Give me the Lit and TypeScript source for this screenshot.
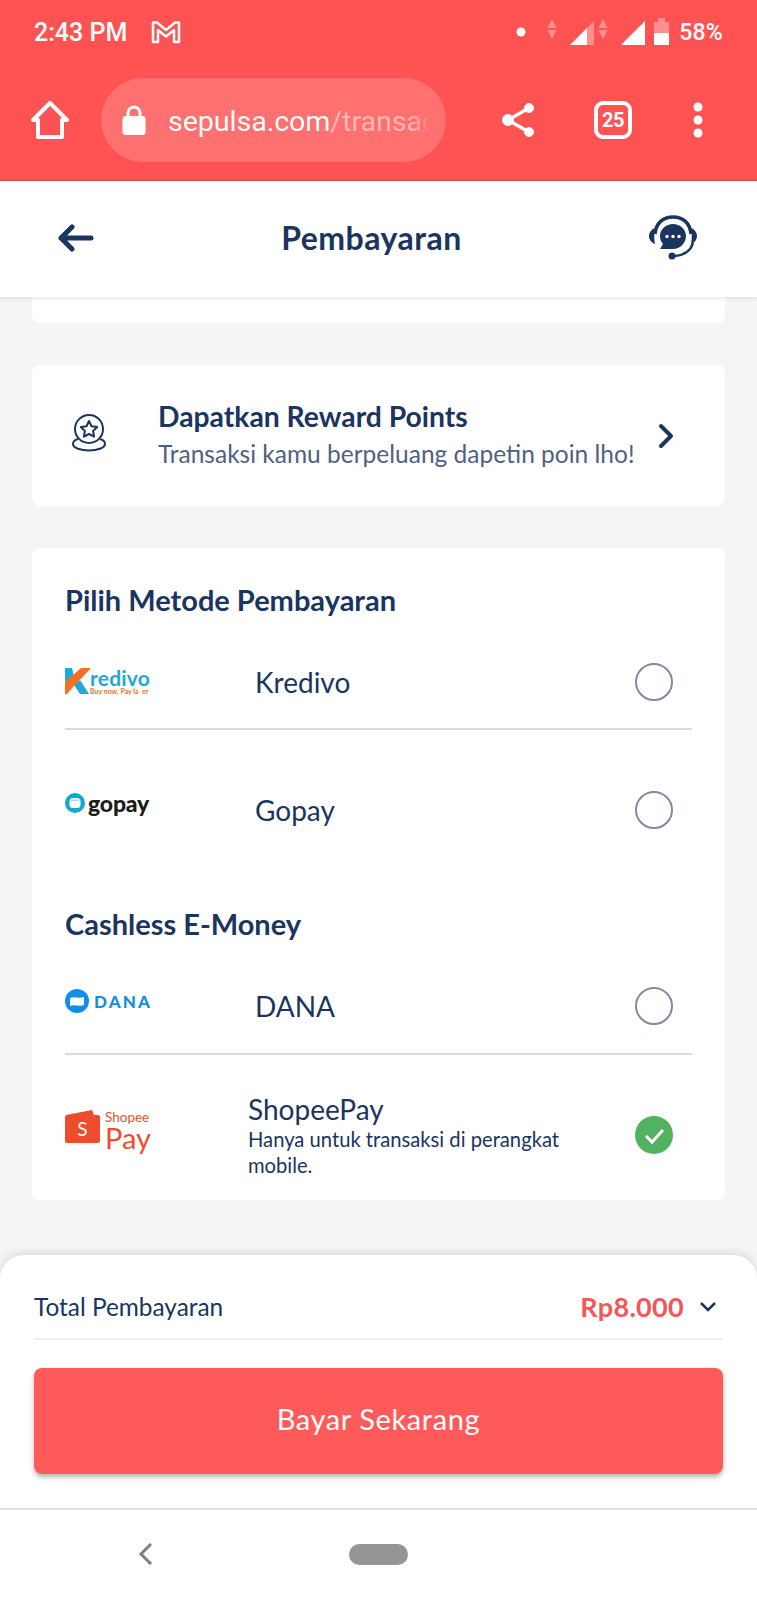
import {LitElement, css, html} from 'lit';
import {customElement} from 'lit/decorators.js';

const NAVY = '#1a3560';

@customElement('app-root')
export class AppRoot extends LitElement {
  static styles = css`
    :host {
      display: flex;
      flex-direction: column;
      width: 757px;
      height: 1600px;
      overflow: hidden;
      background: #f4f5f7;
      font-family: "Lato", "Noto Sans", sans-serif;
      color: #1a3560;
    }
    svg { display: block; flex: none; }

    .chrome {
      height: 181px;
      flex: none;
      box-sizing: border-box;
      background: #ff5252;
      color: #fff;
      padding-top: 17px;
      border-bottom: 1px solid #d85050;
    }
    .status {
      display: flex;
      align-items: center;
      height: 30px;
      padding: 0 34px;
      font-family: Roboto, sans-serif;
      font-size: 25px;
      font-weight: 500;
    }
    .time { width: 117px; }
    .status-right { margin-left: auto; display: flex; align-items: center; gap: 9px; }
    .pct { font-size: 23px; letter-spacing: .2px; }
    .toolbar {
      display: flex;
      align-items: center;
      height: 84px;
      margin-top: 31px;
      padding-left: 31px;
    }
    .url {
      width: 345px;
      height: 84px;
      margin-left: 32px;
      box-sizing: border-box;
      border-radius: 42px;
      background: #ff7070;
      display: flex;
      align-items: center;
      padding-left: 21px;
      font-family: Roboto, sans-serif;
      font-size: 28.5px;
    }
    .url-text {
      margin-left: 22px;
      padding-top: 2px;
      width: 264px;
      overflow: hidden;
      white-space: nowrap;
      -webkit-mask-image: linear-gradient(90deg, #000 92%, transparent);
      mask-image: linear-gradient(90deg, #000 92%, transparent);
    }
    .url-text span { opacity: .5; }
    .share { margin-left: 56px; }
    .tabs {
      margin-left: 59px;
      width: 38px;
      height: 38px;
      box-sizing: border-box;
      border: 4px solid #fff;
      border-radius: 9px;
      font-family: Roboto, sans-serif;
      font-size: 20px;
      font-weight: 700;
      letter-spacing: -.5px;
      display: flex;
      align-items: center;
      justify-content: center;
    }
    .more { margin-left: 61px; }

    .nav {
      height: 116px;
      flex: none;
      box-sizing: border-box;
      background: #fff;
      display: flex;
      align-items: center;
      justify-content: space-between;
      padding: 0 60px 3px 58px;
      box-shadow: 0 1px 4px rgba(0, 0, 0, .12);
      position: relative;
    }
    .nav h1 {
      margin: 0;
      font-size: 32px;
      font-weight: 700;
      letter-spacing: .5px;
    }

    .main {
      flex: 1;
      display: flex;
      flex-direction: column;
      gap: 42px;
      padding: 0 32px;
    }
    .card { background: #fff; border-radius: 8px; }
    .stub { height: 26px; border-radius: 0 0 8px 8px; }
    .reward {
      height: 141px;
      box-sizing: border-box;
      display: flex;
      align-items: center;
      padding-left: 40px;
      padding-right: 51px;
    }
    .reward-icon { margin-top: -6px; }
    .reward-text { margin-left: 52px; flex: 1; padding-top: 1px; }
    .reward-title { font-size: 28.3px; font-weight: 700; line-height: 36px; }
    .reward-sub {
      font-size: 24.5px;
      line-height: 40px;
      color: #4f6180;
      white-space: nowrap;
    }

    .methods {
      height: 652px;
      box-sizing: border-box;
      padding: 33px 33px 0;
      display: flex;
      flex-direction: column;
    }
    h2 {
      margin: 0;
      font-size: 29px;
      font-weight: 700;
      line-height: 38px;
    }
    .row {
      display: flex;
      align-items: center;
      position: relative;
    }
    .row-kredivo { height: 110px; padding-top: 17px; box-sizing: border-box; }
    .row-gopay { height: 160px; }
    .row-dana { height: 110px; padding-top: 16px; box-sizing: border-box; }
    .row-shopee { height: 146px; padding-top: 16px; box-sizing: border-box; }
    .section-two { margin-top: 16px; }
    .logo { width: 190px; flex: none; }
    .logo-kredivo { margin-bottom: 2px; }
    .logo-gopay { margin-bottom: 14px; }
    .logo-dana { margin-bottom: 10px; }
    .logo-shopee { margin-top: -10px; }
    .label { font-size: 28px; }
    .radio {
      margin-left: auto;
      margin-right: 19px;
      width: 38px;
      height: 38px;
      box-sizing: border-box;
      border: 2px solid #7f8ba0;
      border-radius: 50%;
      flex: none;
    }
    .check { margin-left: auto; margin-right: 19px; }
    .sep { height: 2px; background: #d9dcdf; flex: none; }
    .shopee-text { margin-left: -7px; width: 330px; }
    .shopee-sub { font-size: 20.2px; line-height: 26.5px; margin-top: 0; }

    .sheet {
      height: 253px;
      flex: none;
      box-sizing: border-box;
      background: #fff;
      border-radius: 24px 24px 0 0;
      box-shadow: 0 -3px 8px rgba(0, 0, 0, .1);
      padding: 0 34px;
      position: relative;
    }
    .total {
      height: 85px;
      box-sizing: border-box;
      padding-top: 20px;
      display: flex;
      align-items: center;
      border-bottom: 2px solid #eceef0;
      font-size: 24.4px;
    }
    .amount {
      margin-left: auto;
      color: #f25858;
      font-size: 27px;
      font-weight: 700;
      letter-spacing: .3px;
    }
    .caret { margin-left: 16px; margin-right: 7px; }
    .pay {
      margin-top: 28px;
      height: 106px;
      box-sizing: border-box;
      padding-bottom: 5px;
      border-radius: 8px;
      background: #ff5a5a;
      color: #fff;
      font-size: 29px;
      letter-spacing: .6px;
      display: flex;
      align-items: center;
      justify-content: center;
      box-shadow: 0 3px 5px rgba(0, 0, 0, .3);
    }

    .sysnav {
      height: 92px;
      flex: none;
      box-sizing: border-box;
      background: #fff;
      border-top: 2px solid #e2e3e5;
      display: flex;
      align-items: center;
      padding: 0 0 2px 138px;
      position: relative;
    }
    .pill {
      margin-left: 195px;
      width: 59px;
      height: 21px;
      border-radius: 11px;
      background: #959595;
    }

    .kredivo, .gopay, .dana, .spay { display: flex; }
    .kredivo { align-items: flex-start; }
    .kredivo-words { margin-left: -1px; width: 60px; }
    .kredivo-name {
      color: #1fa8d8;
      font-size: 21px;
      font-weight: 700;
      line-height: 21px;
      letter-spacing: .2px;
    }
    .kredivo-tag {
      color: #f37021;
      font-size: 7px;
      font-weight: 700;
      line-height: 7px;
      white-space: pre;
    }
    .gopay { align-items: center; gap: 3px; }
    .gopay-name { font-size: 23px; font-weight: 900; color: #1c1c1c; line-height: 24px; letter-spacing: -.2px; }
    .dana { align-items: center; gap: 5px; }
    .dana-name { font-size: 17px; font-weight: 900; color: #118ee9; letter-spacing: 2.1px; }
    .spay { align-items: flex-start; gap: 5px; color: #ee4d2d; }
    .spay-words { display: flex; flex-direction: column; align-items: flex-start; }
    .spay-top { font-size: 13.5px; line-height: 15px; }
    .spay-big { font-size: 29px; line-height: 26px; }
  `;

  renderStatusIcons() {
    return html`
      <svg width="155" height="30" viewBox="0 0 155 30">
        <circle cx="6" cy="15" r="4.5" fill="#fff"/>
        <g fill="#fff" opacity=".35">
          <path d="M37 2l4.500 9h-9zM37 22l4.500-9h-9z"/>
          <path d="M88 2l4.500 9h-9zM88 22l4.500-9h-9z"/>
        </g>
        <path d="M55 28L72 11v17z" fill="#fff"/>
        <path d="M72 11l7-7v24h-7z" fill="#fff" opacity=".35"/>
        <path d="M106 28l24-24v24z" fill="#fff"/>
        <path d="M139 5h4V1h7v4h4v11h-15z" fill="#fff" opacity=".35"/>
        <path d="M139 16h15v12h-15z" fill="#fff"/>
      </svg>
    `;
  }

  renderHeadset() {
    return html`
      <svg width="48" height="46" viewBox="0 0 48 46" fill=${NAVY}>
        <path d="M6 19C7 8 14 2 24 2s17 6 18 17" fill="none" stroke=${NAVY} stroke-width="3.500"/>
        <path d="M6 13c-3 1-6 4-6 8s3 7 6 8c-1-4-1-12 0-16zM42 13c3 1 6 4 6 8s-3 7-6 8c1-4 1-12 0-16z"/>
        <path d="M24 9c7 0 13 5 13 12s-6 13-13 13H11l3-5c-2-2-3-5-3-8 0-7 6-12 13-12z"/>
        <circle cx="18" cy="21.500" r="1.700" fill="#fff"/>
        <circle cx="24" cy="21.500" r="1.700" fill="#fff"/>
        <circle cx="30" cy="21.500" r="1.700" fill="#fff"/>
        <path d="M44 28c-2 7-8 12-18 13" fill="none" stroke=${NAVY} stroke-width="2.500"/>
        <circle cx="23" cy="41" r="3.500"/>
      </svg>
    `;
  }

  renderKredivo() {
    return html`
      <div class="kredivo">
        <svg width="26" height="27" viewBox="0 0 26 27">
          <path d="M0 1h7l2 9-3 6-6-2z" fill="#1fa8d8"/>
          <path d="M9 18l6-5 9 14h-9z" fill="#1fa8d8"/>
          <path d="M16 1h10L9 19 2 27H0V15z" fill="#f37021"/>
        </svg>
        <div class="kredivo-words">
          <div class="kredivo-name">redivo</div>
          <div class="kredivo-tag">Buy now, Pay la  er</div>
        </div>
      </div>
    `;
  }

  renderGopay() {
    return html`
      <div class="gopay">
        <svg width="20" height="20" viewBox="0 0 20 20">
          <circle cx="10" cy="10" r="10" fill="#12a9d0"/>
          <rect x="4.500" y="5" width="11" height="10" rx="3.500" fill="#fff"/>
          <rect x="6" y="6.500" width="8" height="1.500" rx=".7" fill="#9fdcec"/>
        </svg>
        <span class="gopay-name">gopay</span>
      </div>
    `;
  }

  renderDana() {
    return html`
      <div class="dana">
        <svg width="24" height="24" viewBox="0 0 24 24">
          <circle cx="12" cy="12" r="12" fill="#118ee9"/>
          <path d="M5 9c4-2 9 1 14-1v8c-5 2-9-1-14 1z" fill="#fff"/>
        </svg>
        <span class="dana-name">DANA</span>
      </div>
    `;
  }

  renderSpay() {
    return html`
      <div class="spay">
        <svg width="35" height="33" viewBox="0 0 35 33">
          <path d="M1 5L27 0l2 5z" fill="#ee4d2d"/>
          <rect x="0" y="5" width="35" height="28" rx="2" fill="#ee4d2d"/>
          <text x="17.500" y="26" text-anchor="middle" font-family="Lato, sans-serif" font-size="19" fill="#fff">S</text>
        </svg>
        <div class="spay-words">
          <span class="spay-top">Shopee</span>
          <span class="spay-big">Pay</span>
        </div>
      </div>
    `;
  }

  render() {
    return html`
      <div class="chrome">
        <div class="status">
          <span class="time">2:43 PM</span>
          <svg width="30" height="24" viewBox="0 0 30 24" fill="none" stroke="#fff" stroke-width="2.500" stroke-linejoin="round">
            <path d="M2 2.500h4L15 10l9-7.500h4V22h-5V10l-8 6.500L7 10v12H2z"/>
          </svg>
          <div class="status-right">
            ${this.renderStatusIcons()}
            <span class="pct">58%</span>
          </div>
        </div>
        <div class="toolbar">
          <svg width="38" height="38" viewBox="0 0 38 38" fill="none" stroke="#fff" stroke-width="4" stroke-linejoin="round" stroke-linecap="round">
            <path d="M2 19L19 2l17 17h-5v17H7V19z"/>
          </svg>
          <div class="url">
            <svg width="24" height="30" viewBox="0 0 24 30">
              <path d="M6 13V8a6 6 0 0 1 12 0v5" fill="none" stroke="#fff" stroke-width="3"/>
              <rect x="0.500" y="11" width="23" height="19" rx="3" fill="#fff"/>
            </svg>
            <div class="url-text">sepulsa.com<span>/transaction</span></div>
          </div>
          <svg class="share" width="33" height="36" viewBox="0 0 33 36" fill="#fff" stroke="#fff">
            <path d="M6 18L27 6M6 18l21 12" stroke-width="3.500"/>
            <circle cx="6" cy="18" r="5.500"/>
            <circle cx="27" cy="6" r="4.500"/>
            <circle cx="27" cy="30" r="4.500"/>
          </svg>
          <div class="tabs">25</div>
          <svg class="more" width="10" height="36" viewBox="0 0 10 36" fill="#fff">
            <circle cx="5" cy="5" r="4.500"/>
            <circle cx="5" cy="18" r="4.500"/>
            <circle cx="5" cy="31" r="4.500"/>
          </svg>
        </div>
      </div>

      <div class="nav">
        <svg width="36" height="30" viewBox="0 0 36 30" fill="none" stroke=${NAVY} stroke-width="5" stroke-linecap="round" stroke-linejoin="round">
          <path d="M33 15H3M14 4L3 15l11 11"/>
        </svg>
        <h1>Pembayaran</h1>
        ${this.renderHeadset()}
      </div>

      <div class="main">
        <div class="card stub"></div>
        <div class="card reward">
          <svg class="reward-icon" width="34" height="38" viewBox="0 0 34 38" fill="none" stroke=${NAVY} stroke-width="2" stroke-linejoin="round">
            <circle cx="17" cy="15" r="14"/>
            <path d="M17 7l2.500 5.200 5.700.8-4.100 4 1 5.700-5.100-2.700-5.100 2.700 1-5.700-4.100-4 5.700-.8z"/>
            <path d="M6 25C2 26 1 28 1 30c0 4 8 6.500 16 6.500S33 34 33 30c0-2-1-4-5-5"/>
          </svg>
          <div class="reward-text">
            <div class="reward-title">Dapatkan Reward Points</div>
            <div class="reward-sub">Transaksi kamu berpeluang dapetin poin lho!</div>
          </div>
          <svg width="16" height="26" viewBox="0 0 16 26" fill="none" stroke=${NAVY} stroke-width="4" stroke-linecap="round" stroke-linejoin="round">
            <path d="M3 3l10 10L3 23"/>
          </svg>
        </div>
        <div class="card methods">
          <h2>Pilih Metode Pembayaran</h2>
          <div class="row row-kredivo">
            <div class="logo logo-kredivo">${this.renderKredivo()}</div>
            <span class="label">Kredivo</span>
            <span class="radio"></span>
          </div>
          <div class="sep"></div>
          <div class="row row-gopay">
            <div class="logo logo-gopay">${this.renderGopay()}</div>
            <span class="label">Gopay</span>
            <span class="radio"></span>
          </div>
          <h2 class="section-two">Cashless E-Money</h2>
          <div class="row row-dana">
            <div class="logo logo-dana">${this.renderDana()}</div>
            <span class="label">DANA</span>
            <span class="radio"></span>
          </div>
          <div class="sep"></div>
          <div class="row row-shopee">
            <div class="logo logo-shopee">${this.renderSpay()}</div>
            <div class="shopee-text">
              <div class="label">ShopeePay</div>
              <div class="shopee-sub">Hanya untuk transaksi di perangkat mobile.</div>
            </div>
            <svg class="check" width="38" height="38" viewBox="0 0 38 38">
              <circle cx="19" cy="19" r="19" fill="#53b162"/>
              <path d="M11 20l6 6 11-12" fill="none" stroke="#fff" stroke-width="3"/>
            </svg>
          </div>
        </div>
      </div>

      <div class="sheet">
        <div class="total">
          <span>Total Pembayaran</span>
          <span class="amount">Rp8.000</span>
          <svg class="caret" width="16" height="10" viewBox="0 0 16 10" fill="none" stroke=${NAVY} stroke-width="2.500">
            <path d="M1 1l7 7 7-7"/>
          </svg>
        </div>
        <div class="pay">Bayar Sekarang</div>
      </div>

      <div class="sysnav">
        <svg width="16" height="22" viewBox="0 0 16 22" fill="none" stroke="#808080" stroke-width="3">
          <path d="M13 1L3 11l10 10"/>
        </svg>
        <div class="pill"></div>
      </div>
    `;
  }
}
